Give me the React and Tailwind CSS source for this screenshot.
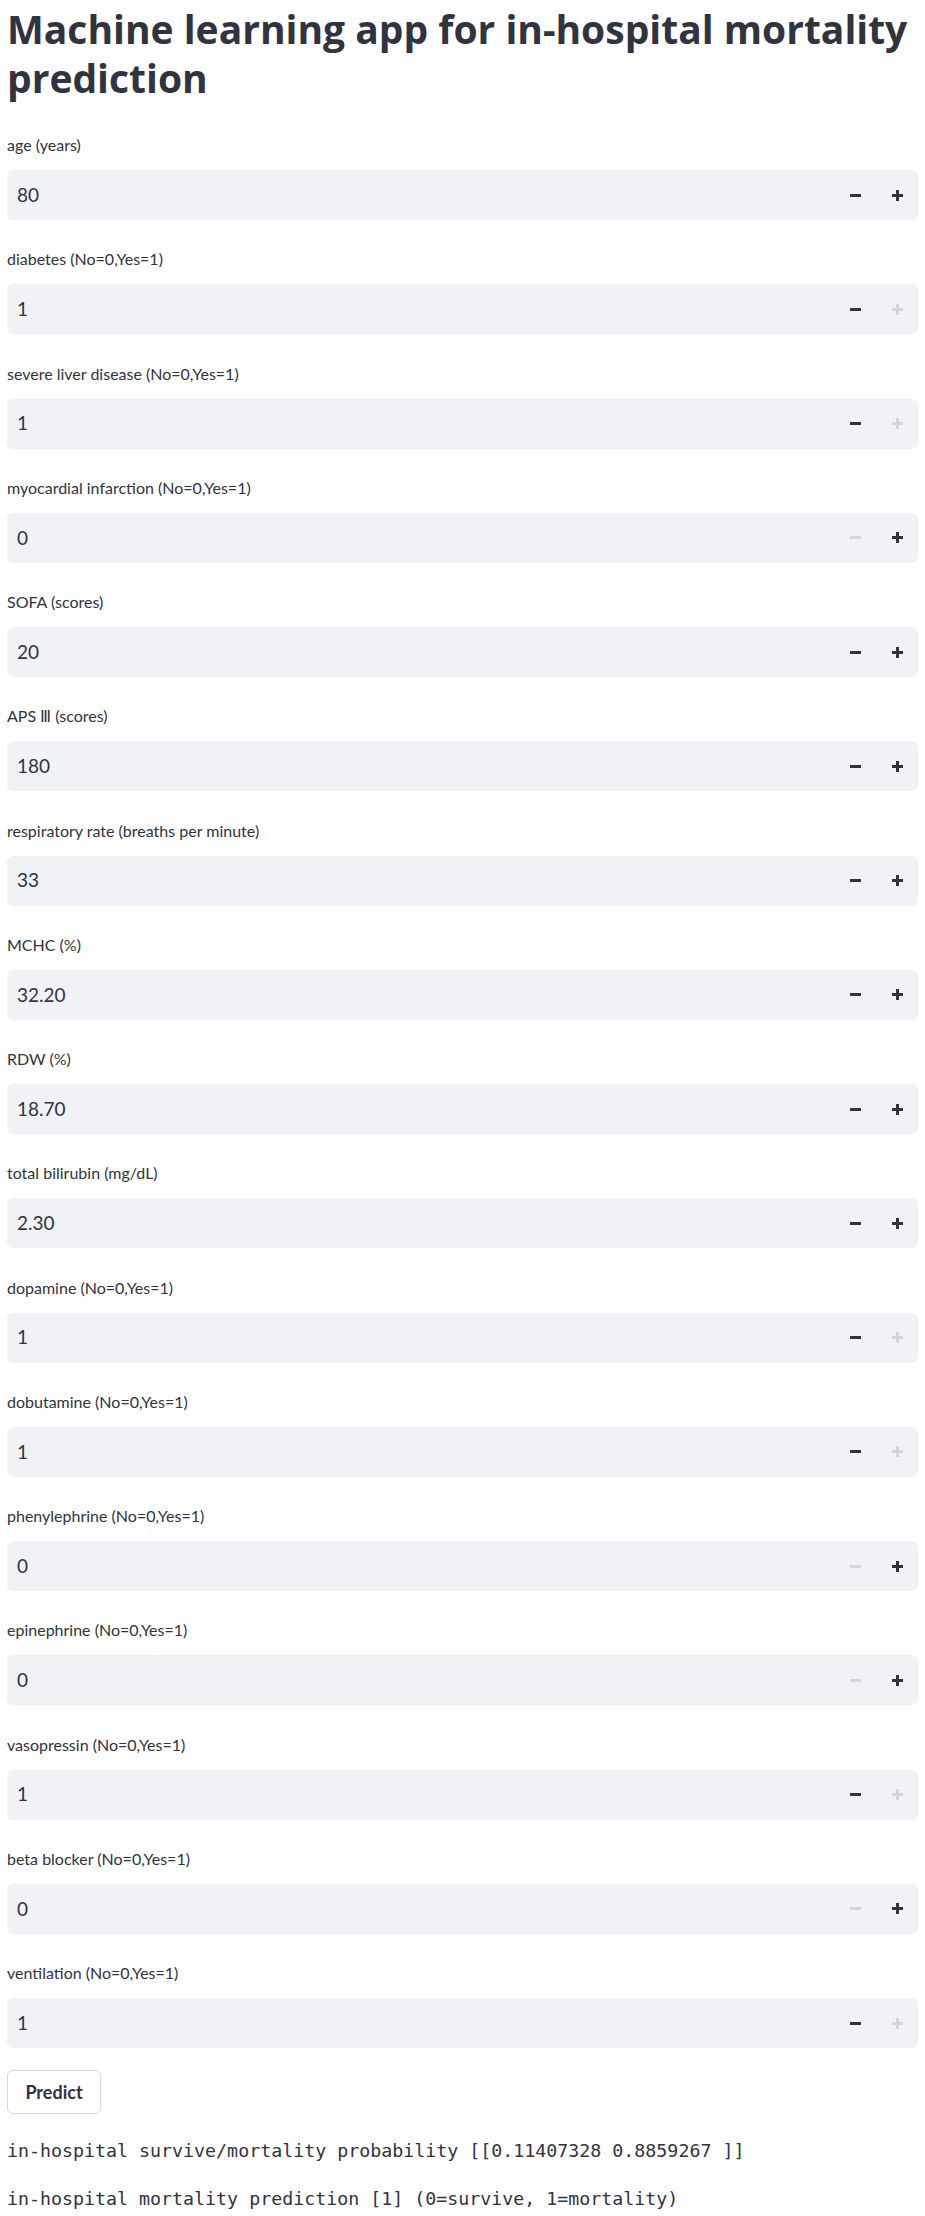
const fields = [
  { label: 'age (years)', value: '80', minus: true, plus: true },
  { label: 'diabetes (No=0,Yes=1)', value: '1', minus: true, plus: false },
  { label: 'severe liver disease (No=0,Yes=1)', value: '1', minus: true, plus: false },
  { label: 'myocardial infarction (No=0,Yes=1)', value: '0', minus: false, plus: true },
  { label: 'SOFA (scores)', value: '20', minus: true, plus: true },
  { label: 'APS Ⅲ (scores)', value: '180', minus: true, plus: true },
  { label: 'respiratory rate (breaths per minute)', value: '33', minus: true, plus: true },
  { label: 'MCHC (%)', value: '32.20', minus: true, plus: true },
  { label: 'RDW (%)', value: '18.70', minus: true, plus: true },
  { label: 'total bilirubin (mg/dL)', value: '2.30', minus: true, plus: true },
  { label: 'dopamine (No=0,Yes=1)', value: '1', minus: true, plus: false },
  { label: 'dobutamine (No=0,Yes=1)', value: '1', minus: true, plus: false },
  { label: 'phenylephrine (No=0,Yes=1)', value: '0', minus: false, plus: true },
  { label: 'epinephrine (No=0,Yes=1)', value: '0', minus: false, plus: true },
  { label: 'vasopressin (No=0,Yes=1)', value: '1', minus: true, plus: false },
  { label: 'beta blocker (No=0,Yes=1)', value: '0', minus: false, plus: true },
  { label: 'ventilation (No=0,Yes=1)', value: '1', minus: true, plus: false },
];

function StepIcon({ kind, enabled }) {
  const color = enabled ? 'text-[#31333f]' : 'text-[#d3d5db]';
  return (
    <span className={`flex h-[50px] w-[42px] items-center justify-center ${color}`}>
      <svg width="13" height="13" viewBox="0 0 13 13" fill="none" stroke="currentColor" strokeWidth="3">
        <path d="M1 6.5h11" />
        {kind === 'plus' && <path d="M6.5 1v11" />}
      </svg>
    </span>
  );
}

function NumberInput({ label, value, minus, plus }) {
  return (
    <div>
      <label className="mb-[15px] block text-[16px] leading-[20px] text-[#31333f]">{label}</label>
      <div className="flex h-[50px] items-center rounded-[6px] bg-[#f0f2f6]">
        <span className="flex-1 pl-[10px] text-[19px] text-[#31333f]">{value}</span>
        <StepIcon kind="minus" enabled={minus} />
        <StepIcon kind="plus" enabled={plus} />
      </div>
    </div>
  );
}

export default function App() {
  return (
    <div className="min-h-[2216px] bg-white px-[7px] pt-[4px] font-['Lato','Liberation_Sans',sans-serif]">
      <h1 className="mb-[33px] font-['Open_Sans','Lato',sans-serif] text-[39px] font-bold leading-[49px] text-[#31333f]">
        Machine learning app for in-hospital mortality prediction
      </h1>

      <div className="flex flex-col gap-[29.25px]">
        {fields.map((f) => (
          <NumberInput key={f.label} {...f} />
        ))}
      </div>

      <button className="mt-[22px] h-[44px] w-[94px] rounded-[6px] border border-[#d5d6d9] bg-white text-[18px] font-bold text-[#31333f]">
        Predict
      </button>

      <div className="font-['DejaVu_Sans_Mono',monospace] text-[18.3px] leading-[24px] text-[#31333f]">
        <p className="mt-[25px]">in-hospital survive/mortality probability [[0.11407328 0.8859267 ]]</p>
        <p className="mt-[24px]">in-hospital mortality prediction [1] (0=survive, 1=mortality)</p>
      </div>
    </div>
  );
}
